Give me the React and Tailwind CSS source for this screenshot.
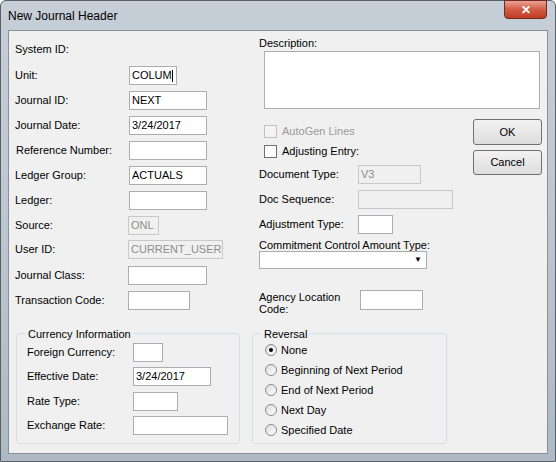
const F = { fontFamily: '"Liberation Sans", Tahoma, sans-serif' };

function Input({ w, value, disabled, h = 19 }) {
  return (
    <div
      className={`border border-[#abadb3] flex items-center px-[2px] text-[11px] ${disabled ? "bg-[#f0f0f0] text-[#8d8d8d] border-[#c8c8c8]" : "bg-white text-black"}`}
      style={{ width: w, height: h }}
    >
      {value}
    </div>
  );
}

function Row({ label, h = 25, lw = 114, children }) {
  return (
    <div className="flex items-center" style={{ height: h }}>
      <div style={{ width: lw }} className="text-[11px] text-black">{label}</div>
      {children}
    </div>
  );
}

function Radio({ checked, label }) {
  return (
    <div className="flex items-center h-[20px] gap-[4px]">
      <div className="w-[12px] h-[12px] rounded-full border border-[#8a8a8a] bg-gradient-to-br from-[#dcdcdc] to-white flex items-center justify-center">
        {checked && <div className="w-[4px] h-[4px] rounded-full bg-black" />}
      </div>
      <span className="text-[11px]">{label}</span>
    </div>
  );
}

function Check({ label, disabled }) {
  return (
    <div className="flex items-center h-[20px] gap-[5px]">
      <div className={`w-[13px] h-[13px] border ${disabled ? "border-[#c0c0c0] bg-[#f4f4f4]" : "border-[#707070] bg-white"}`} />
      <span className={`text-[11px] ${disabled ? "text-[#9a9a9a]" : "text-black"}`}>{label}</span>
    </div>
  );
}

function Group({ title, w, children }) {
  return (
    <div className="relative border border-[#d5dfe5] rounded-[3px] h-[111px]" style={{ width: w }}>
      <div className="absolute -top-[8px] left-[8px] bg-[#f0f0f0] px-[3px] text-[11px]">{title}</div>
      {children}
    </div>
  );
}

function Btn({ label, h }) {
  return (
    <div className="w-[69px] border border-[#707070] rounded-[3px] bg-gradient-to-b from-[#f2f2f2] to-[#dddddd] flex items-center justify-center text-[11px]" style={{ height: h }}>
      {label}
    </div>
  );
}

export default function App() {
  return (
    <div style={F} className="w-[556px] h-[462px] rounded-t-[6px] border border-[#5a5f66] bg-gradient-to-b from-[#c6ced8] via-[#bcc6d1] to-[#aeb9c6] flex flex-col">
      <div className="h-[29px] flex items-start justify-between pl-[7px] pr-[8px]">
        <span className="text-[12px] mt-[6px] text-black">New Journal Header</span>
        <div className="w-[43px] h-[19px] mt-[-1px] rounded-b-[4px] border border-[#6d2b22] bg-gradient-to-b from-[#e8a192] via-[#d25b45] to-[#c23a22] flex items-center justify-center text-white text-[12px] font-bold">✕</div>
      </div>
      <div className="mx-[7px] w-[540px] h-[424px] border border-[#8b9097] bg-[#f0f0f0] text-black flex flex-col">
        <div className="flex h-[295px]">
          <div className="w-[242px] pl-[6px] pt-[4px] flex flex-col">
            <Row label="System ID:" h={28} />
            <Row label="Unit:" ><Input w={48} value={<span>COLUM<span className="inline-block w-px h-[12px] bg-black align-middle" /></span>} /></Row>
            <Row label="Journal ID:"><Input w={78} value="NEXT" /></Row>
            <Row label="Journal Date:"><Input w={78} value="3/24/2017" /></Row>
            <Row label={<span className="pl-[1px]">Reference Number:</span>}><Input w={78} /></Row>
            <Row label="Ledger Group:"><Input w={78} value="ACTUALS" /></Row>
            <Row label="Ledger:"><Input w={78} /></Row>
            <Row label="Source:" h={24} lw={113}><Input w={31} value="ONL" disabled /></Row>
            <Row label="User ID:" lw={113}><Input w={95} value="CURRENT_USER" disabled /></Row>
            <Row label="Journal Class:" h={26} lw={113}><Input w={79} /></Row>
            <Row label="Transaction Code:" lw={113}><Input w={62} /></Row>
          </div>
          <div className="w-[215px] flex flex-col pl-[8px] pt-[4px]">
            <div className="text-[11px] h-[16px]">Description:</div>
            <div className="ml-[5px] w-[276px] h-[58px] border border-[#abadb3] bg-white" />
            <div className="ml-[5px] mt-[12px]"><Check label="AutoGen Lines" disabled /></div>
            <div className="ml-[5px]"><Check label="Adjusting Entry:" /></div>
            <Row label="Document Type:" lw={99} h={26}><Input w={63} value="V3" disabled /></Row>
            <Row label="Doc Sequence:" lw={99}><Input w={95} disabled /></Row>
            <Row label="Adjustment Type:" lw={99} h={24}><Input w={35} /></Row>
            <div className="text-[11px] h-[14px] mt-[1px]">Commitment Control Amount Type:</div>
            <div className="w-[168px] h-[18px] border border-[#abadb3] bg-white flex justify-end">
              <div className="w-[16px] flex items-center justify-center text-[8px]">▼</div>
            </div>
            <div className="flex items-center mt-[16px]">
              <div className="w-[101px] text-[11px] leading-[12px] pt-[6px]">Agency Location<br />Code:</div>
              <Input w={63} h={20} />
            </div>
          </div>
          <div className="ml-[7px] pt-[88px] flex flex-col gap-[5px]">
            <Btn label="OK" h={26} />
            <Btn label="Cancel" h={25} />
          </div>
        </div>
        <div className="flex pl-[7px] pt-[7px] gap-[12px]">
          <Group title="Currency Information" w={224}>
            <div className="pl-[10px] pt-[7px] flex flex-col">
              <Row label="Foreign Currency:" lw={106} h={22}><Input w={30} /></Row>
              <Row label="Effective Date:" lw={106} h={26}><Input w={78} value="3/24/2017" /></Row>
              <Row label="Rate Type:" lw={106} h={24}><Input w={45} /></Row>
              <Row label="Exchange Rate:" lw={106} h={25}><Input w={95} /></Row>
            </div>
          </Group>
          <Group title="Reversal" w={195}>
            <div className="pl-[12px] pt-[6px] flex flex-col">
              <Radio checked label="None" />
              <Radio label="Beginning of Next Period" />
              <Radio label="End of Next Period" />
              <Radio label="Next Day" />
              <Radio label="Specified Date" />
            </div>
          </Group>
        </div>
      </div>
    </div>
  );
}
